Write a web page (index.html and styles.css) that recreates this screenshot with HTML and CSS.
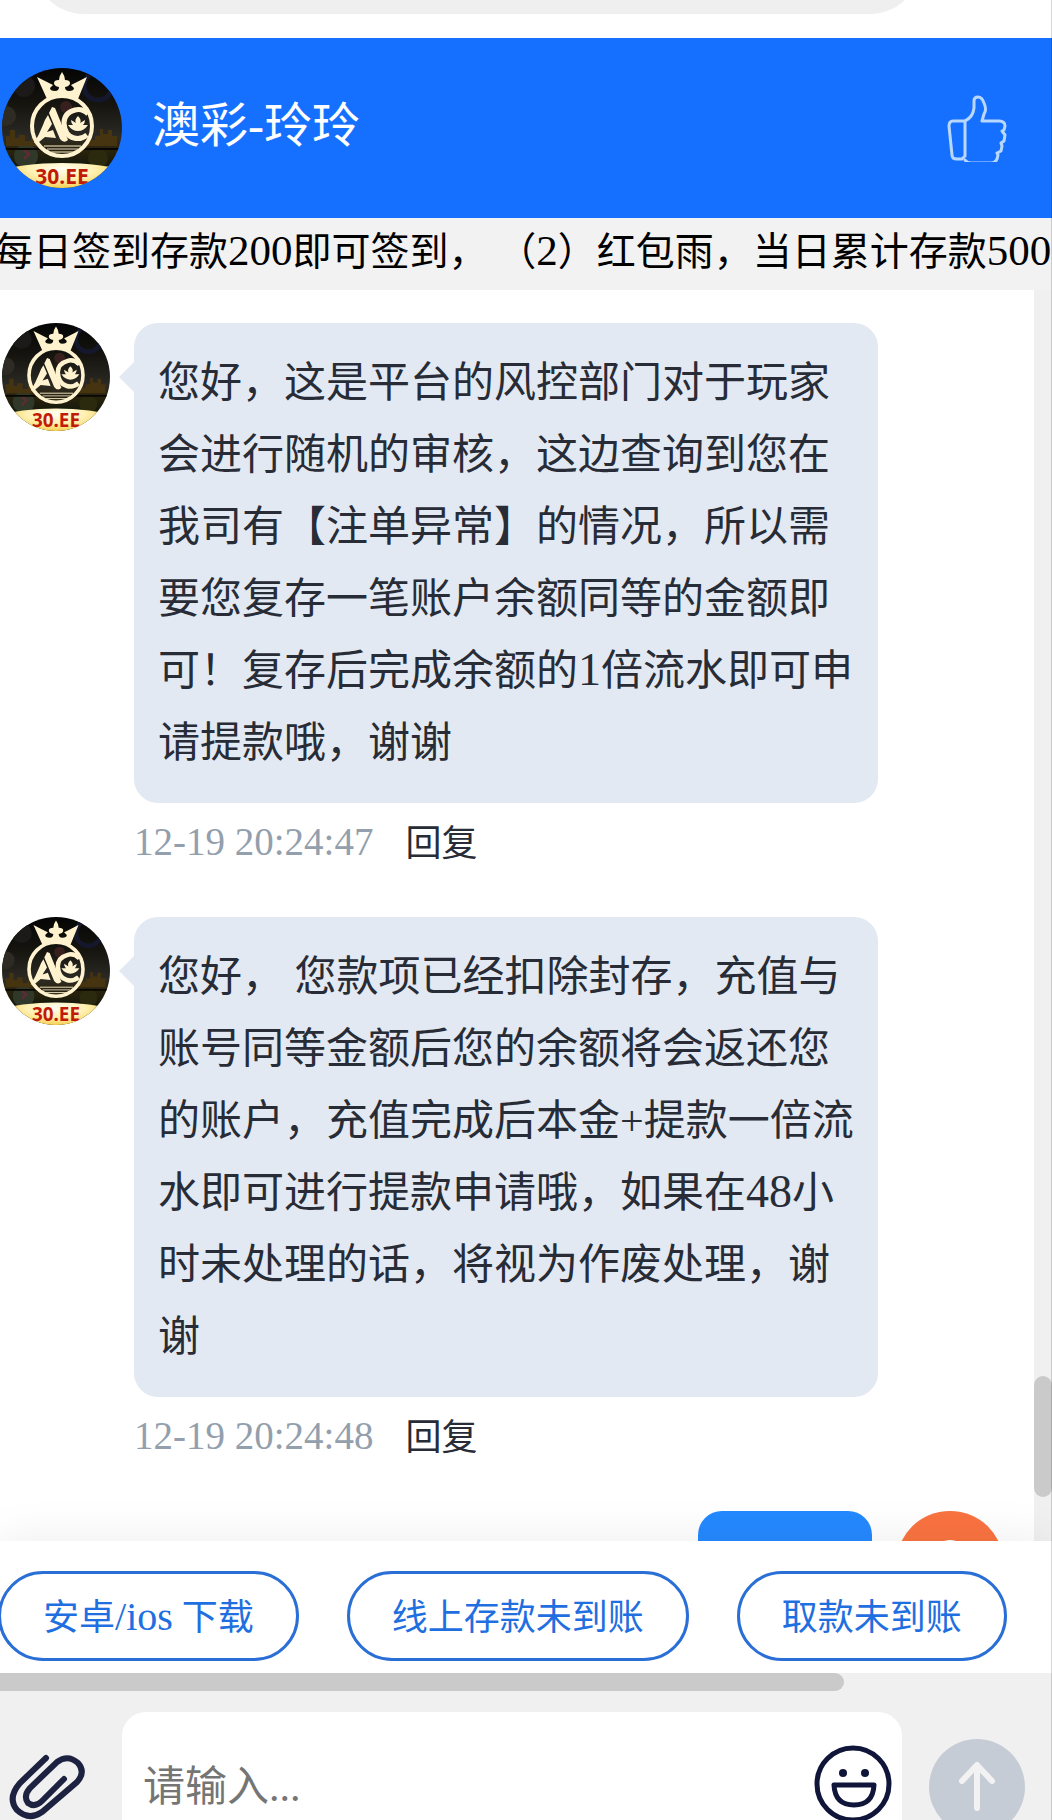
FILE: index.html
```html
<!DOCTYPE html>
<html lang="zh-CN">

<head>
    <meta charset="utf-8">
    <meta name="viewport" content="width=device-width, initial-scale=1">
    <title>澳彩-玲玲</title>

    <link rel="stylesheet" href="styles.css">
</head>

<body>
    <!-- 头像 -->
    <svg class="defs" width="0" height="0" aria-hidden="true">
        <defs>
            <linearGradient id="night" x1="0" y1="0" x2="0" y2="1">
                <stop offset="0" stop-color="#050505" />
                <stop offset=".3" stop-color="#15140f" />
                <stop offset=".58" stop-color="#2c2a25" />
                <stop offset=".68" stop-color="#2a230c" />
                <stop offset=".8" stop-color="#171a0b" />
            </linearGradient>
            <radialGradient id="gold" cx=".5" cy=".1" r=".5">
                <stop offset="0" stop-color="#fffdf0" />
                <stop offset=".35" stop-color="#fff0b0" />
                <stop offset=".7" stop-color="#f3c83c" />
                <stop offset="1" stop-color="#f7dd80" />
            </radialGradient>
            <clipPath id="round">
                <circle cx="60" cy="60" r="60" />
            </clipPath>
            <symbol id="avatar" viewBox="0 0 120 120">
                <g clip-path="url(#round)">
                    <rect width="120" height="120" fill="url(#night)" />
                    <circle cx="96" cy="18" r="14" fill="none" stroke="#15182c" stroke-width="5" />
                    <circle cx="22" cy="18" r="11" fill="#1b1a18" />
                    <circle cx="4" cy="48" r="10" fill="#2d2b24" />
                    <circle cx="64" cy="39" r="6" fill="#38201f" />
                    <circle cx="24" cy="88" r="12" fill="#30382a" />
                    <circle cx="96" cy="90" r="10" fill="#2b2a0e" />
                    <path d="M22 82l5 4-5 5" fill="none" stroke="#5a2c34" stroke-width="3" />
                    <path d="M4 78v-10h4v-6h5v8h4v-3h6v6h6v-4h6v9zM86 78v-6h7v-4h5v-7h3v5h5v-4h4v6h5v10z" fill="#46330f" />
                    <path d="M0 81h120" stroke="#080703" stroke-width="2" />
                    <g fill="#fff3cf">
                        <path d="M35 9l14 7 2 1-3 3q0 3 5 3 4 0 4-4-5-1-5-4 0-3 5-3 0-4 3-8 3 4 3 8 5 0 5 3t-5 4q0 4 4 4 5 0 5-3l-3-3 2-1 14-7-9 22q-15-6-31 0z" />
                        <path d="M47 45l3-6 3 1 13 32q-4 4-8-1zM46 47l4 9-5 8 6-2 3 8-11-1-6 5-5 1q5-8 9-18 2-6 5-10z" />
                    </g>
                    <path d="M86 46q-6-6-13-4-11 3-11 13 1 13 10 15 7 2 13-3" fill="none" stroke="#fff3cf" stroke-width="5" />
                    <path d="M76 48q4 4 2 7l5-3q0 3-2 5h5q-4 6-10 6t-10-6h5q-2-2-2-5l5 3q-2-3 2-7z" fill="#fff3cf" />
                    <circle cx="60" cy="58" r="30" fill="none" stroke="#fff3cf" stroke-width="4" />
                    <path d="M42 78h37M45 81h31M49 84h23" stroke="#fff3cf" stroke-width="1" />
                    <ellipse cx="60" cy="125" rx="96" ry="30" fill="url(#gold)" />
                    <text class="avatar-text" x="60" y="116" text-anchor="middle">30.EE</text>
                </g>
            </symbol>
        </defs>
    </svg>

    <div class="page">
        <div class="top">
            <div class="address"></div>
        </div>

        <header class="header">
            <svg class="header-avatar" role="img" aria-label="澳彩"><use href="#avatar" /></svg>
            <h1 class="header-title">澳彩-玲玲</h1>
            <button class="icon-btn" type="button" aria-label="点赞">
                <svg width="60" height="68" viewBox="0 0 60 68" fill="none" stroke="#b9d8ff" stroke-width="3" stroke-linejoin="round" stroke-linecap="round">
                    <path d="M18 27H6q-4 0-4 5l3 29q0 4 5 4h5l3-3zM18 27v35" />
                    <path d="M18 27q8-4 9-13V7q0-4 4-4t6 6q3 7 0 11l-2 7h17q6 0 6 5l-1 4-2 1 3 4-1 6-3 2 1 3-1 5-4 2 1 2-1 4q-2 4-6 4H24q-4 0-6-3" />
                </svg>
            </button>
        </header>

        <div class="notice">
            <p class="notice-text">每日签到存款<span class="num">200</span>即可签到， （<span class="num">2</span>）红包雨，当日累计存款<span class="num">500</span></p>
        </div>

        <main class="chat">
            <div class="messages">
                <div class="message">
                    <svg class="message-avatar" role="img" aria-label="澳彩"><use href="#avatar" /></svg>
                    <div class="message-main">
                        <p class="bubble">您好，这是平台的风控部门对于玩家会进行随机的审核，这边查询到您在我司有【注单异常】的情况，所以需要您复存一笔账户余额同等的金额即可！复存后完成余额的<span class="num">1</span>倍流水即可申请提款哦，谢谢</p>
                        <div class="meta">
                            <time class="time">12-19 20:24:47</time>
                            <button class="reply" type="button">回复</button>
                        </div>
                    </div>
                </div>

                <div class="message">
                    <svg class="message-avatar" role="img" aria-label="澳彩"><use href="#avatar" /></svg>
                    <div class="message-main">
                        <p class="bubble">您好， 您款项已经扣除封存，充值与账号同等金额后您的余额将会返还您的账户，充值完成后本金+提款一倍流水即可进行提款申请哦，如果在<span class="num">48</span>小时未处理的话，将视为作废处理，谢谢</p>
                        <div class="meta">
                            <time class="time">12-19 20:24:48</time>
                            <button class="reply" type="button">回复</button>
                        </div>
                    </div>
                </div>

                <div class="message mine">
                    <div class="bubble-mine"></div>
                    <svg class="mine-avatar" viewBox="0 0 108 108" aria-hidden="true">
                        <circle cx="54" cy="54" r="54" fill="#fa7340" />
                        <circle cx="54" cy="47" r="18" fill="#fff" />
                        <path d="M20 92q6-22 34-22t34 22q-14 12-34 12T20 92z" fill="#fff" />
                    </svg>
                </div>
            </div>
            <div class="scroll-y">
                <div class="scroll-y-thumb"></div>
            </div>
        </main>

        <nav class="quick">
            <div class="quick-list">
                <button class="quick-btn" type="button">安卓<span class="num">/ios</span> 下载</button>
                <button class="quick-btn" type="button">线上存款未到账</button>
                <button class="quick-btn" type="button">取款未到账</button>
            </div>
            <div class="scroll-x">
                <div class="scroll-x-thumb"></div>
            </div>
        </nav>

        <footer class="composer">
            <div class="composer-row">
                <button class="icon-btn attach" type="button" aria-label="附件">
                    <svg width="78" height="72" viewBox="0 0 78 72" fill="none" stroke="#1d2240" stroke-width="6" stroke-linecap="round">
                        <path d="M38 7L12 32Q-1 47 9 59q12 11 25 2L69 31Q78 21 70 12 60 3 49 11L22 37q-7 8-2 15 7 5 14-2l22-22" />
                    </svg>
                </button>
                <div class="field">
                    <input class="field-input" type="text" placeholder="请输入..." aria-label="请输入">
                    <button class="icon-btn emoji" type="button" aria-label="表情">
                        <svg width="78" height="78" viewBox="0 0 78 78" fill="none" stroke="#10153a" stroke-width="5" stroke-linejoin="round">
                            <circle cx="39" cy="39" r="36" />
                            <circle cx="29" cy="28" r="4" fill="#10153a" stroke="none" />
                            <circle cx="51" cy="28" r="4" fill="#10153a" stroke="none" />
                            <path d="M20 40h40q-1 20-20 20T20 40z" />
                        </svg>
                    </button>
                </div>
                <button class="send" type="button" aria-label="发送">
                    <svg width="48" height="60" viewBox="0 0 48 60" fill="none" stroke="#f2f2f2" stroke-width="6" stroke-linecap="round" stroke-linejoin="round">
                        <path d="M24 51V9M9 24L24 8l15 16" />
                    </svg>
                </button>
            </div>
        </footer>
    </div>
</body>

</html>
```
FILE: styles.css
```css
* {
    box-sizing: border-box;
}

body {
    margin: 0;
    font-family: "Liberation Serif", "Noto Sans CJK SC", serif;
    color: #272c36;
    background: #fff;
}

h1,
p {
    margin: 0;
    font-weight: normal;
}

button {
    margin: 0;
    padding: 0;
    border: none;
    background: none;
    font-family: inherit;
    color: inherit;
    cursor: pointer;
}

svg {
    display: block;
    flex: none;
}

.defs {
    position: absolute;
}

.num {
    line-height: 1;
}

.page {
    height: 100vh;
    display: flex;
    flex-direction: column;
    overflow: hidden;
    position: relative;
}

/* 右侧边线 */
.page::after {
    content: "";
    width: 1px;
    position: absolute;
    top: 0;
    right: 0;
    bottom: 0;
    background: rgba(0, 0, 0, 0.16);
    z-index: 9;
}

.top {
    flex: none;
    height: 38px;
    padding: 0 131px 24px 33px;
}

.address {
    height: 14px;
    overflow: hidden;
    display: flex;
    align-items: flex-end;
}

.address::before {
    content: "";
    flex: 1;
    height: 102px;
    border-radius: 51px;
    background: #efefef;
}

.header {
    flex: none;
    height: 180px;
    padding: 0 45px 0 2px;
    display: flex;
    align-items: center;
    background: #1670ff;
    color: #fff;
}

.header-avatar {
    width: 120px;
    height: 120px;
}

.avatar-text {
    font-family: "Noto Sans", sans-serif;
    font-size: 21px;
    font-weight: bold;
    fill: #c11b08;
}

.header-title {
    flex: 1;
    padding: 0 0 4px 30px;
    font-size: 48px;
    line-height: 72px;
}

.notice {
    flex: none;
    background: #f2f2f2;
    color: #000;
    overflow: hidden;
}

.notice-text {
    margin-left: -6px;
    padding-bottom: 4px;
    font-size: 39px;
    line-height: 68px;
    white-space: nowrap;
}

.notice-text .num {
    font-size: 43px;
}

.chat {
    flex: 1;
    min-height: 0;
    display: flex;
    overflow: hidden;
}

.messages {
    flex: 1;
    padding: 33px 0 0 2px;
    overflow: hidden;
}

.message {
    display: flex;
    gap: 24px;
}

.message-avatar,
.mine-avatar {
    width: 108px;
    height: 108px;
}

.message-main {
    flex: 1;
    margin-right: 156px;
}

.bubble {
    padding: 24px;
    border-radius: 24px;
    background: #e3e9f2;
    font-size: 42px;
    line-height: 72px;
    position: relative;
}

.bubble::before {
    content: "";
    border: 15px solid transparent;
    border-left: none;
    border-right-color: #e3e9f2;
    position: absolute;
    top: 39px;
    left: -15px;
}

.bubble .num {
    font-size: 46px;
}

.meta {
    height: 76px;
    margin-bottom: 38px;
    display: flex;
    align-items: center;
    gap: 32px;
}

.time {
    font-size: 39px;
    color: #939fad;
}

.reply {
    padding-bottom: 2px;
    font-size: 36px;
}

.mine {
    justify-content: flex-end;
    padding-right: 30px;
}

.bubble-mine {
    width: 174px;
    height: 120px;
    border-radius: 24px;
    background: #2489ff;
}

.scroll-y {
    width: 18px;
    padding-bottom: 44px;
    display: flex;
    flex-direction: column;
    justify-content: flex-end;
    background: #f0f0f0;
}

.scroll-y-thumb {
    height: 121px;
    border-radius: 9px;
    background: #cacaca;
}

.quick {
    flex: none;
    background: #fff;
    box-shadow: 0 0 45px rgba(0, 0, 0, 0.08);
    position: relative;
}

.quick-list {
    margin-left: -2px;
    padding: 30px 0 12px;
    display: flex;
    gap: 48px;
}

.quick-btn {
    flex: none;
    height: 90px;
    padding: 0 42px 4px;
    border: 3px solid #2a6fd6;
    border-radius: 45px;
    font-size: 36px;
    color: #1f6fe0;
    white-space: nowrap;
}

.quick-btn .num {
    font-size: 40px;
}

.scroll-x {
    height: 18px;
    background: #f0f0f0;
}

.scroll-x-thumb {
    width: 80.2%;
    height: 18px;
    border-radius: 0 9px 9px 0;
    background: #cacaca;
}

.composer {
    flex: none;
    height: 129px;
    padding-top: 21px;
    background: #f0f0f0;
    overflow: hidden;
    position: relative;
}

.composer-row {
    height: 150px;
    padding: 0 27px 0 8px;
    display: flex;
    align-items: center;
}

.attach {
    width: 114px;
}

.field {
    flex: 1;
    height: 150px;
    margin-right: 27px;
    padding: 0 10px 0 21px;
    display: flex;
    align-items: center;
    border-radius: 24px;
    background: #fff;
}

.field-input {
    flex: 1;
    min-width: 0;
    height: 72px;
    padding: 0;
    border: none;
    outline: none;
    background: none;
    font-family: inherit;
    font-size: 42px;
    color: inherit;
}

.field-input::placeholder {
    color: #757575;
}

.emoji {
    padding-bottom: 6px;
}

.send {
    width: 96px;
    height: 96px;
    display: flex;
    justify-content: center;
    align-items: center;
    border-radius: 50%;
    background: #c5ccd5;
}
```
